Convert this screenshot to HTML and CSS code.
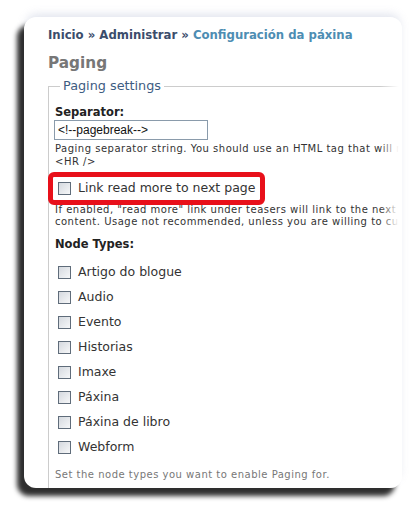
FILE: index.html
```html
<!DOCTYPE html>
<html>
<head>
<meta charset="utf-8">
<link rel="stylesheet" href="styles.css">
</head>
<body>
<div class="card">
  <div class="content">
    <div class="crumbs"><a class="crumb">Inicio</a> » <a class="crumb">Administrar</a> » <span class="current">Configuración da páxina</span></div>
    <h1 class="title">Paging</h1>
    <fieldset class="set">
      <legend class="legend">Paging settings</legend>
      <div class="field">
        <div class="label">Separator:</div>
        <div class="input">&lt;!--pagebreak--&gt;</div>
        <div class="desc">Paging separator string. You should use an HTML tag that will render reasonably when paging is not enabled, such as &lt;!--pagebreak--&gt; or<br>&lt;HR /&gt;</div>
      </div>
      <div class="field readmore">
        <div class="check"><span class="box"></span><span class="ctext">Link read more to next page</span></div>
        <div class="hl"></div>
        <div class="desc tight">If enabled, "read more" link under teasers will link to the next page of the<br>content. Usage not recommended, unless you are willing to customize your theme.</div>
      </div>
      <div class="field">
        <div class="label types">Node Types:</div>
        <div class="list">
          <div class="check"><span class="box"></span><span class="ctext">Artigo do blogue</span></div>
          <div class="check"><span class="box"></span><span class="ctext">Audio</span></div>
          <div class="check"><span class="box"></span><span class="ctext">Evento</span></div>
          <div class="check"><span class="box"></span><span class="ctext">Historias</span></div>
          <div class="check"><span class="box"></span><span class="ctext">Imaxe</span></div>
          <div class="check"><span class="box"></span><span class="ctext">Páxina</span></div>
          <div class="check"><span class="box"></span><span class="ctext">Páxina de libro</span></div>
          <div class="check"><span class="box"></span><span class="ctext">Webform</span></div>
        </div>
        <div class="desc light">Set the node types you want to enable Paging for.</div>
      </div>
    </fieldset>
  </div>
</div>
</body>
</html>
```

FILE: styles.css
```css
html, body {
  margin: 0;
  padding: 0;
  background: #ffffff;
}
body {
  width: 409px;
  height: 512px;
  overflow: hidden;
  padding-top: 17px;
  box-sizing: border-box;
}
.card {
  position: relative;
  margin-left: 24px;
  width: 378px;
  height: 471px;
  background: #ffffff;
  border-radius: 12px;
  box-shadow: -7px 8px 5px rgba(0, 0, 0, 0.82), 0 -5px 8px -2px rgba(160, 170, 200, 0.3);
  overflow: hidden;
  font-family: "DejaVu Sans", Verdana, sans-serif;
  color: #222;
}
.card::after {
  content: "";
  position: absolute;
  top: 0;
  right: 0;
  width: 22px;
  height: 100%;
  background: linear-gradient(to right, rgba(255,255,255,0), #ffffff 85%);
}
.content {
  padding: 10px 0 0 24px;
  width: 420px;
}
.crumbs {
  font-size: 11.7px;
  font-weight: bold;
  line-height: 16px;
  color: #3b4d6c;
  white-space: nowrap;
}
.crumb { color: #3b4d6c; }
.current { color: #4d8db3; }
.title {
  margin: 10px 0 0 0;
  font-size: 15.3px;
  line-height: 20px;
  font-weight: bold;
  color: #777777;
}
.set {
  margin: 5px 0 0 0;
  padding: 10px 0 0 6px;
  border: 1px solid #cccccc;
  border-bottom: none;
  border-right: none;
  min-height: 420px;
}
.legend {
  padding: 0 3px;
  margin-left: 5px;
  font-size: 12.8px;
  line-height: 16px;
  color: #3e5c82;
}
.label {
  font-size: 11.5px;
  font-weight: bold;
  line-height: 16px;
  color: #222;
}
.input {
  margin-left: -1px;
  width: 149px;
  height: 18px;
  border: 1px solid #8a9bab;
  font-family: "Liberation Sans", Arial, sans-serif;
  font-size: 12px;
  line-height: 18px;
  padding-left: 3px;
  color: #111;
}
.desc {
  margin-top: 2px;
  font-size: 10px;
  line-height: 13px;
  color: #333;
  white-space: nowrap;
  letter-spacing: 0.5px;
}
.desc.tight {
  margin-top: 8px;
  line-height: 12px;
}
.desc.light {
  color: #777;
  margin-top: 13px;
}
.readmore {
  position: relative;
  margin-top: 12px;
}
.hl {
  position: absolute;
  left: -7px;
  top: -8px;
  width: 207px;
  height: 23px;
  border: 5px solid #e8101a;
  border-radius: 6px;
}
.check {
  display: flex;
  align-items: center;
  height: 16px;
  padding-left: 3px;
}
.box {
  width: 11px;
  height: 11px;
  border: 1px solid #5f6c7a;
  background: linear-gradient(135deg, #d5d9df, #f6f7f8);
  flex: none;
}
.ctext {
  margin-left: 7px;
  font-size: 12.5px;
  line-height: 16px;
  color: #333;
  white-space: nowrap;
}
.types { margin-top: 8px; }
.list {
  display: flex;
  flex-direction: column;
  gap: 9px;
  margin-top: 12px;
}
```
